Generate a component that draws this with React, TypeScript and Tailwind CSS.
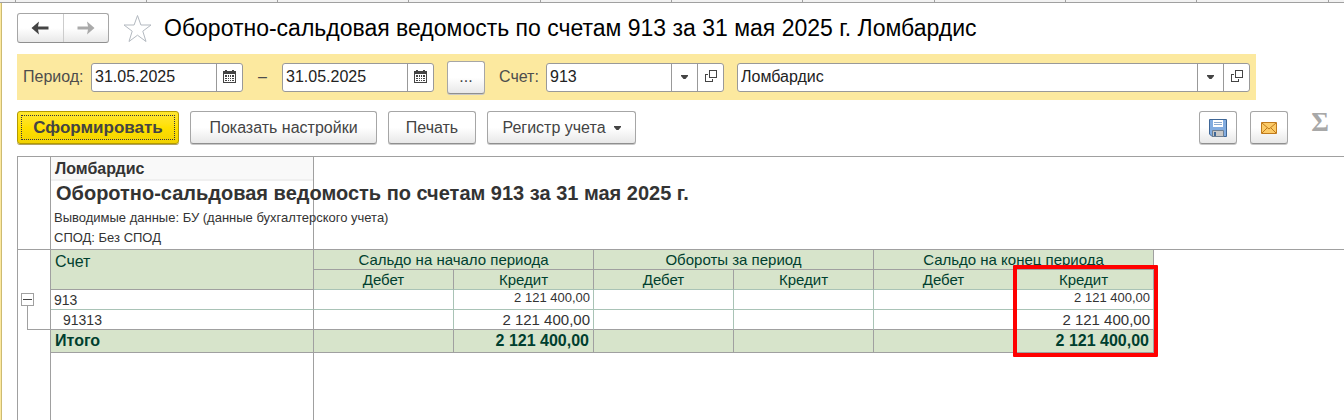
import { useState } from "react";

const LINE = "border-[#a0a0a0]";
const SOFT = "border-[#a9c3b6]";
const TABS = [16, 131, 131, 131, 132, 131, 131, 132, 131, 131, 132];
const PERIODS = ["Сальдо на начало периода", "Обороты за период", "Сальдо на конец периода"];

const BUTTON =
     "flex items-center justify-center rounded-[3px] border border-[#a6a6a6] border-b-[#8f8f8f] bg-linear-to-b from-white from-50% to-[#e8e8e8] text-[#444] shadow-[0_1px_0_#c8c8c8]";
const FIELD = "flex h-[29px] items-stretch overflow-hidden rounded-[3px] border border-[#999] bg-white text-[#222]";
const SIDE = "flex w-[26px] shrink-0 items-center justify-center border-l border-[#999]";

function CalendarIcon() {
     return (
          <svg width="13" height="13" viewBox="0 0 13 13" shapeRendering="crispEdges" className="mb-[2px]">
               <path d="M0 1h2V0h2v1h5V0h2v1h2v12H0z" fill="#444" />
               <path d="M1 4h11v8H1z" fill="#fff" />
               <path d="M2 5h2v2H2zM5 5h1v2H5zM7 5h1v2H7zM9 5h2v2H9zM2 8h2v1H2zM5 8h1v1H5zM7 8h1v1H7zM9 8h2v1H9zM2 10h2v1H2zM5 10h1v1H5zM7 10h1v1H7zM9 10h2v1H9z" fill="#444" />
          </svg>
     );
}

function OpenIcon() {
     return (
          <svg width="12" height="12" viewBox="0 0 12 12" fill="none" stroke="#444" shapeRendering="crispEdges" className="mb-[2px]">
               <path d="M4.5 0.5h7v7h-7z" />
               <path d="M3 4.5H0.5v7h7V9" />
          </svg>
     );
}

function Caret() {
     return (
          <svg width="7" height="4" viewBox="0 0 7 4">
               <path d="M0 0h7v1L4.500 4h-2L0 1z" fill="#444" />
          </svg>
     );
}

function Arrow({ flip, color }: { flip?: boolean; color: string }) {
     return (
          <svg width="18" height="14" viewBox="0 0 18 14" className={flip ? "-scale-x-100" : ""}>
               <path d="M0.500 7L8 0.500L7 5.500h10.500v3H7L8 13.500z" fill={color} />
          </svg>
     );
}

function DateField({ label, value, onChange }: { label: string; value: string; onChange: (v: string) => void }) {
     return (
          <div className={`${FIELD} w-[152px]`}>
               <input aria-label={label} value={value} onChange={(e) => onChange(e.target.value)} className="w-full min-w-0 px-[3px] outline-none" />
               <button aria-label="Календарь" className={SIDE}>
                    <CalendarIcon />
               </button>
          </div>
     );
}

function RefField({ id, label, value, className, onChange }: { id: string; label?: string; value: string; className: string; onChange: (v: string) => void }) {
     return (
          <div className={`${FIELD} ${className}`}>
               <input id={id} aria-label={label} value={value} onChange={(e) => onChange(e.target.value)} className="w-full min-w-0 px-[3px] outline-none" />
               <button aria-label="Выбрать" className={SIDE}>
                    <Caret />
               </button>
               <button aria-label="Открыть" className={SIDE}>
                    <OpenIcon />
               </button>
          </div>
     );
}

function AmountCells({ value, cell }: { value: string; cell: string }) {
     return (
          <>
               {PERIODS.map((p, i) => [
                    <td key={p + "d"} className={cell} />,
                    <td key={p + "k"} className={cell}>
                         {i === 1 ? "" : value}
                    </td>,
               ])}
          </>
     );
}

export default function App() {
     const [from, setFrom] = useState("31.05.2025");
     const [to, setTo] = useState("31.05.2025");
     const [account, setAccount] = useState("913");
     const [company, setCompany] = useState("Ломбардис");
     const [open, setOpen] = useState(true);

     return (
          <div className="flex min-h-screen flex-col overflow-hidden bg-white font-['Liberation_Sans',Arial,sans-serif] text-base leading-5 text-[#333]">
               <div className="flex h-[3px] shrink-0 border-b border-[#a0a0a0] bg-[#f2f2f2]">
                    {TABS.map((w, i) => (
                         <div key={i} style={{ width: w }} className="shrink-0 border-r border-[#a0a0a0]" />
                    ))}
               </div>

               <div className="flex grow border-l border-[#fce99f]">
                    <div className="flex min-w-0 grow flex-col border-l border-[#cdbb72] pl-[15px]">
                         {/* Title */}
                         <header className="mt-[10px] flex h-[30px] items-center">
                              <div className="flex h-[30px] w-[92px] overflow-hidden rounded-[3px] border border-[#a6a6a6] border-b-[#8f8f8f] bg-linear-to-b from-white from-50% to-[#e8e8e8]">
                                   <button aria-label="Назад" className="flex flex-1 items-center justify-center border-r border-[#ccc]">
                                        <Arrow color="#444" />
                                   </button>
                                   <button aria-label="Вперед" className="flex flex-1 items-center justify-center">
                                        <Arrow flip color="#aaa" />
                                   </button>
                              </div>
                              <button aria-label="Избранное" className="ml-[13px]">
                                   <svg width="31" height="29" viewBox="0 0 31 29" fill="none" stroke="#b3b9c0">
                                        <path d="M15.500 1.500L18.900 11H29l-8.200 6.200 3.200 10.300-8.500-6.300-8.500 6.300 3.200-10.300L2 11h10.100z" />
                                   </svg>
                              </button>
                              <h1 className="ml-[11px] text-[23px] text-black">Оборотно-сальдовая ведомость по счетам 913 за 31 мая 2025 г. Ломбардис</h1>
                         </header>

                         {/* Filters */}
                         <div className="mt-[11px] mr-[88px] flex h-[46px] items-center bg-[#fce99f] pr-[6px] pl-[6px] text-[#4d4d4d]">
                              <span className="w-[68px] shrink-0">Период:</span>
                              <DateField label="Начало периода" value={from} onChange={setFrom} />
                              <span className="w-[39px] text-center">–</span>
                              <DateField label="Конец периода" value={to} onChange={setTo} />
                              <button className={`${BUTTON} ml-[13px] h-[33px] w-[38px]`}>...</button>
                              <label htmlFor="account" className="ml-[14px] w-[47px] shrink-0">Счет:</label>
                              <RefField id="account" value={account} onChange={setAccount} className="w-[178px]" />
                              <RefField id="company" label="Организация" value={company} onChange={setCompany} className="ml-[13px] flex-1" />
                         </div>

                         {/* Commands */}
                         <div className="mt-[11px] flex h-[33px] gap-[11px] pr-[5px]">
                              <button className="w-[162px] rounded-[3px] border border-[#b39b00] bg-linear-to-b from-[#ffe72e] via-[#ffe000] to-[#f2d200] p-[3px] text-[17px] font-bold text-[#444] shadow-[0_1px_0_#b0a060]">
                                   <span className="flex h-full items-center justify-center border border-dotted border-[#334]">Сформировать</span>
                              </button>
                              <button className={`${BUTTON} w-[187px]`}>Показать настройки</button>
                              <button className={`${BUTTON} w-[88px]`}>Печать</button>
                              <button className={`${BUTTON} w-[149px] gap-2`}>
                                   Регистр учета
                                   <Caret />
                              </button>
                              <div className="ml-auto flex gap-[13px]">
                                   <button aria-label="Сохранить" className={`${BUTTON} w-[38px]`}>
                                        <svg width="18" height="18" viewBox="0 0 18 18">
                                             <path d="M0.500 0.500h17v17H3L0.500 15z" fill="#82ace0" stroke="#3f6797" />
                                             <path d="M4 1h10v7H4z" fill="#fff" />
                                             <path d="M5 3.500h8M5 5.500h8" stroke="#8ba9cf" />
                                             <path d="M3.500 11.500h11v6h-11z" fill="#c8c8c8" stroke="#6f7f91" />
                                             <path d="M5 13h2v4H5z" fill="#3f6797" />
                                        </svg>
                                   </button>
                                   <button aria-label="Отправить по почте" className={`${BUTTON} w-[38px]`}>
                                        <svg width="16" height="12" viewBox="0 0 16 12" fill="none" stroke="#c07a1c">
                                             <path d="M0.500 0.500h15v11H0.500z" fill="#fccb68" />
                                             <path d="M1 1l7 6 7-6M1 11l5-5M15 11l-5-5" />
                                        </svg>
                                   </button>
                                   <button aria-label="Сумма" className="w-[38px] pb-3 text-center font-['Liberation_Serif',serif] text-[27px] font-bold text-[#a8a8a8]">Σ</button>
                              </div>
                         </div>

                         {/* Report */}
                         <main className={`mt-3 flex grow border-t border-l ${LINE}`}>
                              <div className={`w-[33px] shrink-0 border-r ${LINE}`}>
                                   <div className={`h-[93px] border-b ${LINE}`} />
                                   <div className="pt-[43px] pl-[3px]">
                                        <button
                                             aria-label="Свернуть группу"
                                             onClick={() => setOpen(!open)}
                                             className="flex size-[13px] items-center justify-center border border-[#a0a0a0] bg-white"
                                        >
                                             <span className="h-px w-[9px] bg-[#444]" />
                                        </button>
                                        <div className={`ml-[6px] h-6 border-b border-l ${LINE}`} />
                                   </div>
                              </div>

                              <div className="flex min-w-0 grow flex-col">
                                   <table className="w-full table-fixed border-separate border-spacing-0 text-[15px] leading-[18px] whitespace-nowrap">
                                        <colgroup>
                                             <col className="w-[263px]" />
                                             {[0, 1, 2, 3, 4, 5].map((i) => (
                                                  <col key={i} className="w-[140px]" />
                                             ))}
                                             <col />
                                        </colgroup>
                                        <thead className="text-[#003f2f]">
                                             <tr className="h-[93px] text-left align-top text-[#333]">
                                                  <td className={`border-r border-b p-0 ${LINE}`}>
                                                       <div className="h-6 border-b-2 border-[#f0f0f0] bg-[#f9f9f9] pl-1 text-base leading-6 font-bold">Ломбардис</div>
                                                       <div className="pl-[5px] text-xl leading-6 font-bold">Оборотно-сальдовая ведомость по счетам 913 за 31 мая 2025 г.</div>
                                                       <div className="pt-[3px] pl-[3px] text-[13px] leading-5">
                                                            Выводимые данные: БУ (данные бухгалтерского учета)
                                                            <br />
                                                            СПОД: Без СПОД
                                                       </div>
                                                  </td>
                                                  <td colSpan={7} className={`border-b p-0 ${LINE}`} />
                                             </tr>
                                             <tr className="h-5 bg-[#d7e4cb]">
                                                  <th rowSpan={2} className={`border-r border-b p-0 pl-1 text-left align-top text-base font-normal ${LINE}`}>Счет</th>
                                                  {PERIODS.map((p) => (
                                                       <th key={p} colSpan={2} className={`border-r border-b p-0 font-normal ${LINE}`}>{p}</th>
                                                  ))}
                                                  <td rowSpan={5} className="bg-white" />
                                             </tr>
                                             <tr className="h-5 bg-[#d7e4cb]">
                                                  {PERIODS.map((p, i) => [
                                                       <th key={p + "d"} className={`border-r border-b border-b-[#a9c3b6] p-0 font-normal ${LINE}`}>Дебет</th>,
                                                       <th key={p + "k"} className={`relative border-r border-b border-b-[#a9c3b6] p-0 font-normal ${LINE}`}>
                                                            Кредит
                                                            {i === 2 && <div className="pointer-events-none absolute -top-[5px] -left-px h-[92px] w-[145px] rounded-[1px] border-4 border-[#ff0000]" />}
                                                       </th>,
                                                  ])}
                                             </tr>
                                        </thead>
                                        <tbody>
                                             <tr className="h-5 text-right">
                                                  <td className={`border-r border-b border-r-[#a0a0a0] p-0 pl-[3px] text-left text-sm leading-[18px] ${SOFT}`}>913</td>
                                                  <AmountCells value="2 121 400,00" cell={`border-r border-b p-0 pr-[3px] align-top text-[13px] leading-4 ${SOFT}`} />
                                             </tr>
                                             {open && (
                                                  <tr className="h-5 text-right">
                                                       <td className={`border-r border-b p-0 pl-3 text-left text-sm leading-[18px] ${LINE}`}>91313</td>
                                                       <AmountCells value="2 121 400,00" cell={`border-r border-b border-b-[#a0a0a0] p-0 pr-[3px] ${SOFT}`} />
                                                  </tr>
                                             )}
                                             <tr className="h-[23px] bg-[#d7e4cb] text-right text-base leading-5 font-bold text-[#003f2f]">
                                                  <td className={`border-r border-b p-0 pl-1 text-left ${LINE}`}>Итого</td>
                                                  <AmountCells value="2 121 400,00" cell={`border-r border-b p-0 pr-1 ${LINE}`} />
                                             </tr>
                                        </tbody>
                                   </table>
                                   <div className={`w-[263px] grow border-r ${LINE}`} />
                              </div>
                         </main>
                    </div>
               </div>
          </div>
     );
}
